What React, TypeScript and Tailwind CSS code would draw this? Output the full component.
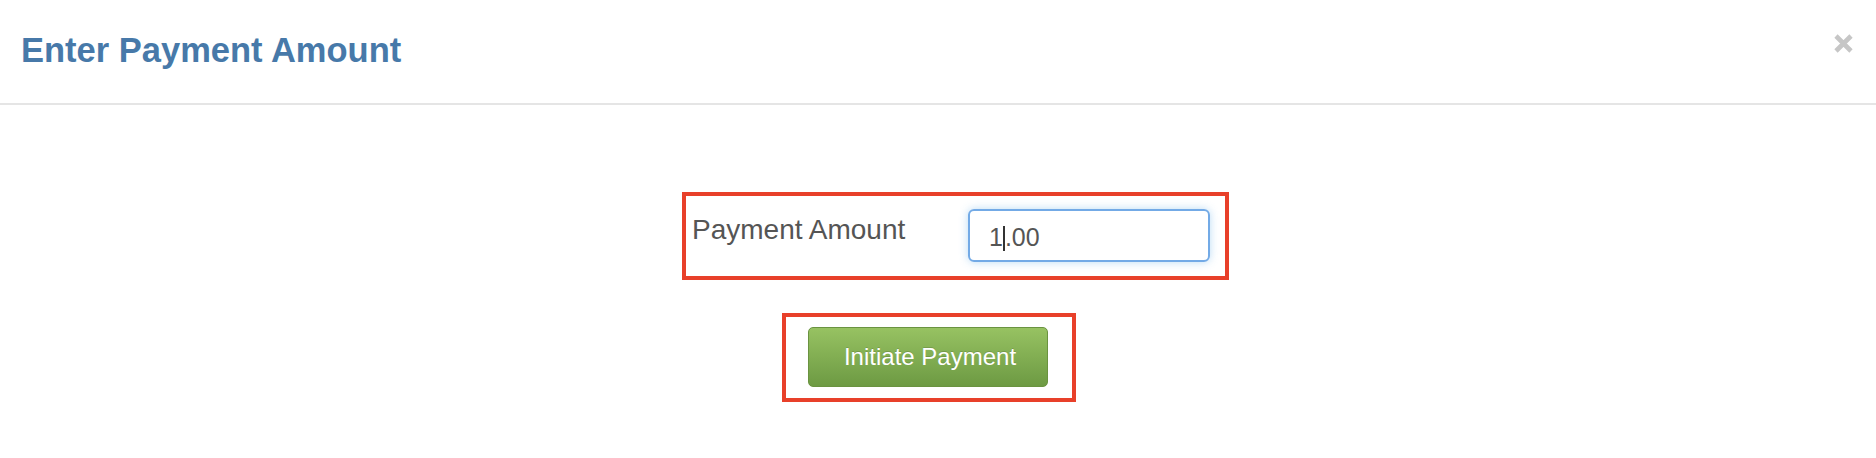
export default function App() {
  return (
    <div className="w-full h-[458px] bg-white font-['Liberation_Sans',Arial,sans-serif]">
      {/* Header */}
      <div className="h-[105px] border-b-2 border-[#e5e5e5] flex justify-between items-start pl-[21px] pr-[22px]">
        <h4 className="pt-[30px] text-[34.5px] leading-[40px] font-bold text-[#4779a9]">Enter Payment Amount</h4>
        <button className="mt-[34px] text-[#c6c6c6]" aria-label="Close">
          <svg width="21" height="19" viewBox="0 0 21 19">
            <path d="M3 2 L18 17 M18 2 L3 17" stroke="currentColor" strokeWidth="4.6" />
          </svg>
        </button>
      </div>

      {/* Body */}
      <div className="flex flex-col items-start pt-[87px]">
        <div className="ml-[682px] w-[547px] h-[88px] border-4 border-[#e8402a] flex items-start justify-between pl-[6px] pr-[15px] pt-[13px]">
          <label className="mt-[5px] text-[28px] leading-[32px] text-[#555]">Payment Amount</label>
          <div className="w-[242px] h-[53px] border-2 border-[#73aae6] rounded-[6px] shadow-[0_0_8px_rgba(102,175,233,0.45)] pl-[19px] pt-[11px] text-[25px] leading-[30px] text-[#555]">
            1<span className="inline-block w-[2px] h-[25px] bg-[#333] align-[-5px]" />.00
          </div>
        </div>

        <div className="ml-[782px] mt-[33px] w-[294px] h-[89px] border-4 border-[#e8402a] pl-[22px] pt-[10px]">
          <button className="w-[240px] h-[60px] pl-[4px] rounded-[5px] border border-[#6a9340] bg-gradient-to-b from-[#97c262] to-[#6d9a43] text-white text-[24px] leading-[28px] [text-shadow:0_-1px_0_rgba(0,0,0,0.15)]">
            Initiate Payment
          </button>
        </div>
      </div>
    </div>
  )
}
